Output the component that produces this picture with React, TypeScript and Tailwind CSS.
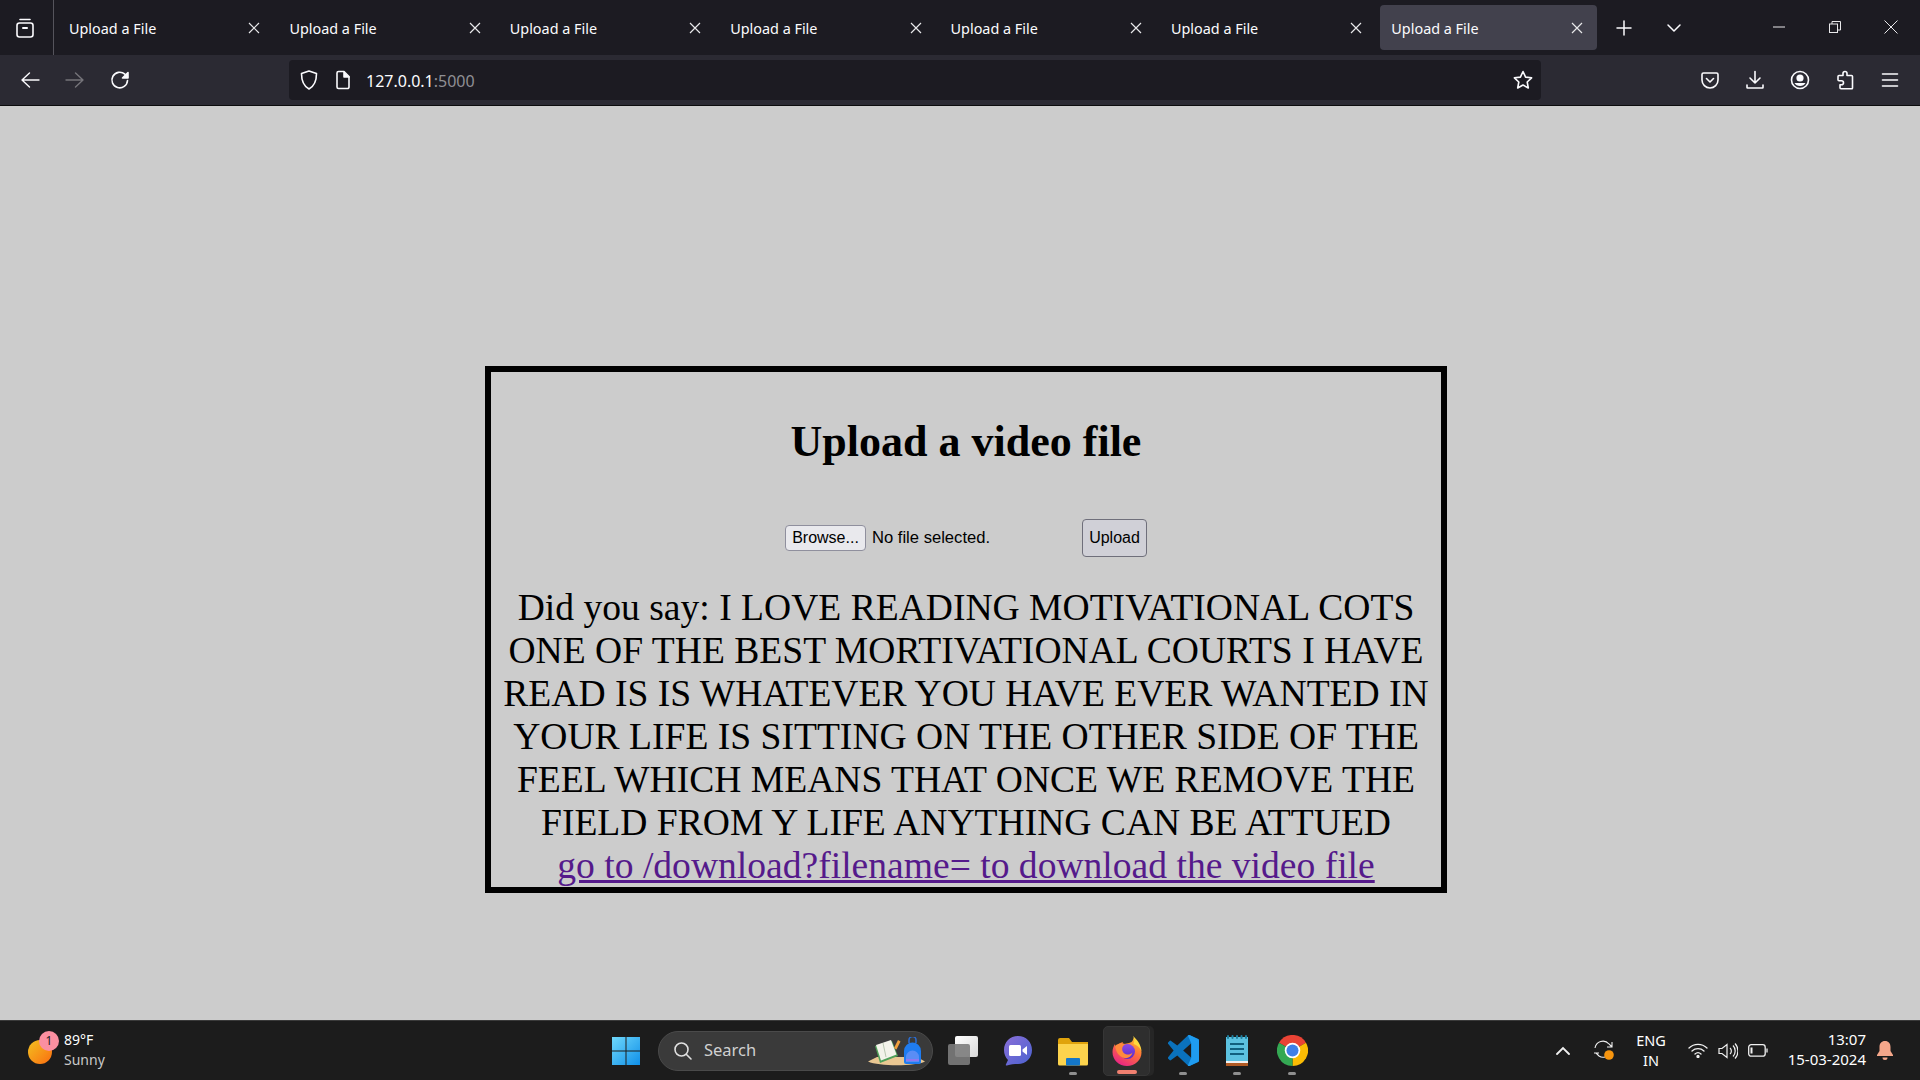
import React from "react";

const ui = "font-['Noto_Sans','Open_Sans',sans-serif]";

function Tab({ active }: { active?: boolean }) {
  return (
    <div className="w-[220.4px] shrink-0 px-[2px] pt-[5px] pb-[5px]">
      <div className={`h-[45px] rounded-[4px] flex items-center pl-[10px] pr-[14px] justify-between ${active ? "bg-[#42414d]" : ""}`}>
        <span className="text-[14.4px] text-[#fbfbfe] ml-[1px] translate-y-[1px]">Upload a File</span>
        <svg width="12" height="12" viewBox="0 0 12 12" fill="none" stroke="#e8e8ea" strokeWidth="1.2"><path d="M1 1l10 10M11 1L1 11" /></svg>
      </div>
    </div>
  );
}

function Ico({ children, w = 20, h = 20, vb = "0 0 20 20", color = "#fbfbfe", sw = 1.6 }: { children: React.ReactNode; w?: number; h?: number; vb?: string; color?: string; sw?: number }) {
  return (
    <svg width={w} height={h} viewBox={vb} fill="none" stroke={color} strokeWidth={sw} strokeLinecap="round" strokeLinejoin="round">
      {children}
    </svg>
  );
}

const lines = [
  "Did you say: I LOVE READING MOTIVATIONAL COTS",
  "ONE OF THE BEST MORTIVATIONAL COURTS I HAVE",
  "READ IS IS WHATEVER YOU HAVE EVER WANTED IN",
  "YOUR LIFE IS SITTING ON THE OTHER SIDE OF THE",
  "FEEL WHICH MEANS THAT ONCE WE REMOVE THE",
  "FIELD FROM Y LIFE ANYTHING CAN BE ATTUED",
];

function Firefox() {
  return (
    <svg width="30" height="30" viewBox="0 0 30 30">
      <defs>
        <linearGradient id="ff" x1="0.8" y1="0" x2="0.25" y2="1">
          <stop offset="0" stopColor="#ffc82d" />
          <stop offset="0.45" stopColor="#ff7139" />
          <stop offset="1" stopColor="#e8208a" />
        </linearGradient>
        <linearGradient id="ffp" x1="0.5" y1="0" x2="0.5" y2="1">
          <stop offset="0" stopColor="#8a4be8" />
          <stop offset="1" stopColor="#5b2bc4" />
        </linearGradient>
      </defs>
      <path d="M21 0c0 3 3 5 5 8 2 2.500 3.500 5.500 3.500 8.500C29.500 24 23 30 15 30S.5 24 .5 16c0-3 1-6 2.500-8 0 1.500.5 2.500 1.500 3.500C5.500 8.500 8 6.500 11 6c-.5 1-.5 2 0 2.500 3-1.500 7-1 9-3 1.500-1.500 1.500-3.500 1-5.500z" fill="url(#ff)" />
      <path d="M21 0c3.500 3 8 8 8.500 15-2-4-4.500-6-8-7 1-2.500 1-5.500-.5-8z" fill="#ffd83d" />
      <circle cx="15.500" cy="15.500" r="7.500" fill="url(#ffp)" />
      <path d="M3 10c3-3 7-3.500 10-2-1.500 1-2.500 2.500-2.800 4.500-.3 3 1.800 5.500 4.800 6 2 .3 4-.3 5.500-2-1 4-4.500 6-8 5.500C7 21 4 16 3 10z" fill="#ff8a3c" />
    </svg>
  );
}

function Chrome() {
  return (
    <svg width="31" height="31" viewBox="0 0 32 32">
      <path d="M16 16 L2.100 8 A16 16 0 0 1 29.900 8 Z" fill="#ea4335" />
      <path d="M16 16 L29.900 8 A16 16 0 0 1 16 32 Z" fill="#fbbc04" />
      <path d="M16 16 L16 32 A16 16 0 0 1 2.100 8 Z" fill="#34a853" />
      <circle cx="16" cy="16" r="8" fill="#fff" />
      <circle cx="16" cy="16" r="6.200" fill="#3f7fe8" />
    </svg>
  );
}

function TaskApp({ w, mark, children }: { w: string; mark?: boolean; children: React.ReactNode }) {
  return (
    <div className={`relative h-[50px] flex items-center justify-center ${w}`}>
      {children}
      {mark && <span className="absolute bottom-[1px] left-1/2 -translate-x-1/2 w-[8px] h-[3px] rounded-full bg-[#8f8f8f]" />}
    </div>
  );
}

export default function App() {
  return (
    <div className={`w-[1920px] h-[1080px] overflow-hidden flex flex-col bg-[#cccccc] ${ui}`}>
      {/* tab strip */}
      <div className="h-[55px] shrink-0 bg-[#1c1b22] flex">
        <div className="w-[54px] shrink-0 border-r border-[#55545c] flex items-center justify-center pr-[3px]">
          <Ico w={20} h={22} vb="0 0 20 22">
            <path d="M5 2.500h10" />
            <rect x="2" y="6" width="16" height="14" rx="2.500" />
            <path d="M8 11h4" strokeWidth="2" />
          </Ico>
        </div>
        <div className="ml-[2px] flex">
          {[0, 1, 2, 3, 4, 5].map((i) => <Tab key={i} />)}
          <Tab active />
        </div>
        <div className="w-[50px] flex items-center justify-center">
          <Ico w={18} h={18} vb="0 0 18 18" sw={1.5}><path d="M9 2v14M2 9h14" /></Ico>
        </div>
        <div className="w-[50px] flex items-center justify-center">
          <Ico w={18} h={12} vb="0 0 18 12" sw={1.5}><path d="M3 3l6 6 6-6" /></Ico>
        </div>
        <div className="ml-auto flex items-center pb-[2px] pr-[1px]">
          <div className="w-[56px] flex justify-center">
            <svg width="12" height="12" viewBox="0 0 12 12" stroke="#e8e8ea" strokeWidth="1"><path d="M0 6h12" /></svg>
          </div>
          <div className="w-[56px] flex justify-center">
            <svg width="12" height="12" viewBox="0 0 12 12" fill="none" stroke="#e8e8ea" strokeWidth="1"><rect x="0.500" y="3" width="8" height="8.500" /><path d="M3 3V0.500h8.500V9H8.500" /></svg>
          </div>
          <div className="w-[56px] flex justify-center">
            <svg width="14" height="14" viewBox="0 0 14 14" stroke="#e8e8ea" strokeWidth="1"><path d="M0.500 0.500l13 13M13.500 0.500l-13 13" /></svg>
          </div>
        </div>
      </div>

      {/* toolbar */}
      <div className="h-[51px] shrink-0 bg-[#2b2a33] border-b border-[#0c0c0d] flex items-center">
        <div className="w-[289px] shrink-0 flex items-center pl-[20px] gap-[25px]">
          <Ico sw={1.4}><path d="M19 10H2M9.500 3L2 10l7.500 7" /></Ico>
          <Ico color="#75747a" sw={1.4}><path d="M1 10h17M10.500 3L18 10l-7.500 7" /></Ico>
          <Ico><path d="M17.500 10.500a7.800 7.800 0 1 1-2.600-6.300L17.500 7" /><path d="M18 2.500V8h-5.500z" fill="#fbfbfe" /></Ico>
        </div>
        <div className="w-[1252px] h-[40px] rounded-[4px] bg-[#1c1b22] flex items-center pl-[10px] pr-[7px]">
          <Ico w={20} h={22} vb="0 0 20 22"><path d="M10 2l7.500 2.500c0 7-2 12.500-7.500 15.500C4.500 17 2.500 11.500 2.500 4.500z" /></Ico>
          <span className="ml-[16px]">
            <Ico w={16} h={20} vb="0 0 16 20"><path d="M2 3a1.500 1.500 0 0 1 1.500-1.500H9l5 5V17a1.500 1.500 0 0 1-1.500 1.500h-9A1.500 1.500 0 0 1 2 17z" /><path d="M9 2v5h5" fill="#fbfbfe" /></Ico>
          </span>
          <span className="ml-[15px] text-[16px] translate-y-[1px] text-[#fbfbfe]">127.0.0.1<span className="text-[#8f8f94]">:5000</span></span>
          <span className="ml-auto">
            <Ico w={22} h={22} vb="0 0 22 22"><path d="M11 2.500l2.600 5.600 6 .7-4.400 4.200 1.100 6-5.300-3-5.300 3 1.100-6L2.400 8.800l6-.7z" /></Ico>
          </span>
        </div>
        <div className="flex-1 flex items-center justify-end pr-[20px] gap-[25px]">
          <Ico w={20} h={20}><path d="M3.500 3h13A1.500 1.500 0 0 1 18 4.500V10a8 8 0 0 1-16 0V4.500A1.500 1.500 0 0 1 3.500 3z" /><path d="M6.500 8.500l3.500 3.500 3.500-3.500" /></Ico>
          <Ico w={20} h={20}><path d="M10 1.500v11.500M5 8l5 5 5-5" /><path d="M2 15v2.500a.5.5 0 0 0 .5.5h15a.5.5 0 0 0 .5-.5V15" /></Ico>
          <Ico w={20} h={20}><circle cx="10" cy="10" r="8.500" /><circle cx="10" cy="8" r="2.800" fill="#fbfbfe" /><path d="M4.500 13h11c-1 2-3 3-5.500 3s-4.500-1-5.500-3z" fill="#fbfbfe" stroke="none" /></Ico>
          <Ico w={20} h={20}><path d="M8 5.500V3.500a2 2 0 0 1 4 0v2h4.500a1 1 0 0 1 1 1V18a.8.800 0 0 1-.8.8H6a1 1 0 0 1-1-1v-3h1.500a2 2 0 0 0 0-4H4a1 1 0 0 1-1-1V6.500a1 1 0 0 1 1-1z" /></Ico>
          <Ico w={20} h={20}><path d="M2.500 4h15M2.500 10h15M2.500 16h15" /></Ico>
        </div>
      </div>

      {/* page */}
      <main className="flex-1 flex flex-col items-center pt-[260px]">
        <div className="ml-[12px] w-[962px] h-[527px] border-[6px] border-black text-center font-['Liberation_Serif',serif] text-black">
          <h1 className="mt-[45px] text-[44px] leading-[49px] font-bold">Upload a video file</h1>
          <form className="mt-[53px] h-[38px] flex items-center justify-center font-['Liberation_Sans',sans-serif] text-[16.6px]" onSubmit={(e) => e.preventDefault()}>
            <button type="button" className="w-[81px] h-[26px] rounded-[4px] border border-[#8f8f9d] bg-[#e9e9ed] text-[16px] leading-none">Browse...</button>
            <span className="ml-[6px] w-[210px] text-left">No file selected.</span>
            <button type="submit" className="w-[65px] h-[38px] rounded-[4px] border border-[#6f6f7b] bg-[#d0d0d7] text-[16px] leading-none">Upload</button>
          </form>
          <div className="mt-[29px] text-[37.6px] leading-[43px]">
            {lines.map((l) => <div key={l} className="whitespace-nowrap">{l}</div>)}
            <a href="#" className="text-[#551a8b] underline whitespace-nowrap">go to /download?filename= to download the video file</a>
          </div>
        </div>
      </main>

      {/* taskbar */}
      <div className="h-[60px] shrink-0 bg-[#1c1c1c] border-t border-[#3a3a3a] flex items-center relative">
        <div className="w-[611px] shrink-0 flex items-center pl-[28px]">
          <div className="relative w-[36px] h-[40px]">
            <span className="absolute left-0 top-[9px] w-[24px] h-[24px] rounded-full bg-gradient-to-br from-[#f0c020] to-[#f96a10]" />
            <span className="absolute left-[11px] top-0 w-[20px] h-[20px] rounded-full bg-[#fb8fa0] text-[12px] leading-[20px] text-center text-[#222]">1</span>
          </div>
          <div className="flex flex-col text-[14px] leading-[20px] -translate-y-[1px]">
            <span className="text-white">89°F</span>
            <span className="text-[#c8c8c8]">Sunny</span>
          </div>
        </div>

        <svg width="30" height="30" viewBox="0 0 30 30" className="shrink-0">
          <defs>
            <linearGradient id="win" x1="0" y1="0" x2="1" y2="1"><stop offset="0" stopColor="#6fd8fb" /><stop offset="1" stopColor="#0f8fe8" /></linearGradient>
          </defs>
          <path d="M1 1h13.500v13.500H1zM15.500 1H29v13.500H15.500zM1 15.500h13.500V29H1zM15.500 15.500H29V29H15.500z" fill="url(#win)" />
        </svg>

        <div className="ml-[17px] w-[275px] h-[40px] rounded-full bg-[#3a3a3a] border border-[#4a4a4a] flex items-center pl-[14px] relative shrink-0">
          <svg width="20" height="20" viewBox="0 0 20 20" fill="none" stroke="#e0e0e0" strokeWidth="1.600" strokeLinecap="round"><circle cx="8.500" cy="8.500" r="6.500" /><path d="M13.500 13.500L18 18" /></svg>
          <span className="ml-[11px] text-[16.5px] text-[#d0d0d0]">Search</span>
          <svg width="57" height="30" viewBox="0 0 57 30" className="absolute right-[7px] top-[5px]">
            <path d="M0 24.500L9 20h40l8 4.500c-10 5-46 5-57 0z" fill="#e9c792" />
            <path d="M7 9l17-5 6 15-18 7z" fill="#4fa058" />
            <path d="M8 8l15-5 5.500 14.500-15.500 6z" fill="#f3f3ea" />
            <path d="M15 6l3 14" stroke="#b9c7b0" strokeWidth="1" />
            <path d="M26 11l4-8 2.500 1.500-4 8z" fill="#f0a03c" />
            <path d="M36 14a8.500 8.500 0 0 1 17 0v11a2 2 0 0 1-2 2H38a2 2 0 0 1-2-2z" fill="#1f7cf0" />
            <path d="M41 6V3a3 3 0 0 1 7 0v3" fill="none" stroke="#2a6fd8" strokeWidth="1.500" />
            <path d="M38 20a6.500 6.500 0 0 1 13 0v5H38z" fill="#5a8df5" />
            <path d="M38 23h13" stroke="#a070f0" strokeWidth="1.500" />
          </svg>
        </div>

        <div className="ml-[15px] flex items-center shrink-0">
          <TaskApp w="w-[30px]">
            <div className="relative w-[30px] h-[29px]">
              <span className="absolute right-0 top-0 w-[23px] h-[21px] rounded-[2px] bg-gradient-to-br from-[#fff] to-[#d8d8d8]" />
              <span className="absolute left-0 bottom-0 w-[22px] h-[21px] rounded-[2px] bg-[#7c7c7c]/90" />
            </div>
          </TaskApp>
          <div className="ml-[25px]">
            <TaskApp w="w-[30px]">
              <svg width="30" height="31" viewBox="0 0 30 31">
                <defs><linearGradient id="meet" x1="0" y1="0" x2="1" y2="1"><stop offset="0" stopColor="#8a6fd8" /><stop offset="1" stopColor="#4a62d0" /></linearGradient></defs>
                <path d="M15 1c8 0 14 6 14 14s-6 14-14 14c-4 0-7 0-11 1.500-1 .3-1.500-.3-1-1.200L5 25C2.500 22.500 1 19 1 15 1 7 7 1 15 1z" fill="url(#meet)" />
                <rect x="6" y="10" width="12" height="11" rx="1.500" fill="#fff" />
                <path d="M19.500 14.500l4.500-3.500v9l-4.500-3.500z" fill="#fff" />
              </svg>
            </TaskApp>
          </div>
          <div className="ml-[25px]">
            <TaskApp w="w-[30px]" mark>
              <svg width="30" height="30" viewBox="0 0 30 30">
                <path d="M0 4a2 2 0 0 1 2-2h9l3 4h16v6H0z" fill="#e0a30c" />
                <path d="M0 8h30v20a1.500 1.500 0 0 1-1.500 1.500h-27A1.500 1.500 0 0 1 0 28z" fill="#fcd34d" />
                <rect x="8" y="22" width="14" height="7.500" rx="1" fill="#1477c9" />
              </svg>
            </TaskApp>
          </div>
          <div className="ml-[15px] relative w-[47px] h-[50px]">
            <span className="absolute right-[-4px] top-0 w-[47px] h-[50px] rounded-[5px] bg-[#262626]" />
            <div className="absolute inset-0 rounded-[5px] bg-[#2e2e2e] border border-[#363636] flex items-center justify-center">
              <Firefox />
              <span className="absolute bottom-[1px] left-1/2 -translate-x-1/2 w-[20px] h-[4px] rounded-full bg-[#f08070]" />
            </div>
          </div>
          <div className="ml-[17px]">
            <TaskApp w="w-[32px]" mark>
              <svg width="31" height="31" viewBox="0 0 100 100">
                <path fillRule="evenodd" d="M71 99L97 87a5 5 0 0 0 3-5V18a5 5 0 0 0-3-5L71 1a6 6 0 0 0-7 1L30 34 10 19a4 4 0 0 0-5 0L1 23a4 4 0 0 0 0 6L18 50 1 71a4 4 0 0 0 0 6l4 4a4 4 0 0 0 5 0L30 66l34 32a6 6 0 0 0 7 1zM75 27L49 50 75 73z" fill="#0a72bd" />
                <path d="M71 99L97 87a5 5 0 0 0 3-5V18a5 5 0 0 0-3-5L71 1a6 6 0 0 0-7 1L75 27V73L64 98a6 6 0 0 0 7 1z" fill="#1f9cf0" />
              </svg>
            </TaskApp>
          </div>
          <div className="ml-[27px]">
            <TaskApp w="w-[22px]" mark>
              <svg width="22" height="31" viewBox="0 0 22 31">
                <rect x="0" y="2" width="22" height="24" fill="#5cc2e0" />
                <rect x="0" y="26" width="22" height="2" fill="#f0f0f0" />
                <rect x="0" y="28" width="22" height="3" fill="#b05a24" />
                <path d="M2 3V1M6.500 3V1M11 3V1M15.500 3V1M20 3V1" stroke="#1f7f9e" strokeWidth="2" strokeLinecap="round" />
                <path d="M4 9h14M4 14h14M4 19h14" stroke="#11607e" strokeWidth="2" />
              </svg>
            </TaskApp>
          </div>
          <div className="ml-[28px]">
            <TaskApp w="w-[32px]" mark><Chrome /></TaskApp>
          </div>
        </div>

        <div className="flex-1 h-full relative text-white">
          <div className="absolute right-[350px] top-[25px]">
            <svg width="14" height="9" viewBox="0 0 14 9" fill="none" stroke="#f0f0f0" strokeWidth="1.800" strokeLinecap="round"><path d="M1 8l6-6 6 6" /></svg>
          </div>
          <div className="absolute right-[305px] top-[18px]">
            <svg width="22" height="22" viewBox="0 0 22 22" fill="none" stroke="#f0f0f0" strokeWidth="1.100">
              <path d="M2 9a8 8 0 0 1 14-4l3 3M19 3v5h-5" />
              <path d="M3 14l3 3a7 7 0 0 0 6 1M1 14h5" />
              <circle cx="16" cy="16" r="4.800" fill="#f7950e" stroke="none" />
            </svg>
          </div>
          <div className="absolute right-[251px] top-[9px] w-[36px] text-center text-[14.5px] leading-[20px]">ENG<br />IN</div>
          <div className="absolute right-[212px] top-[21px]">
            <svg width="20" height="16" viewBox="0 0 20 16" fill="none" stroke="#f0f0f0" strokeWidth="1.300" strokeLinecap="round"><path d="M1 6a13 13 0 0 1 18 0M4 9a9 9 0 0 1 12 0M7 12a4.500 4.500 0 0 1 6 0" /><circle cx="10" cy="14.500" r="1" fill="#f0f0f0" /></svg>
          </div>
          <div className="absolute right-[182px] top-[21px]">
            <svg width="20" height="18" viewBox="0 0 20 18" fill="none" stroke="#f0f0f0" strokeWidth="1.200"><path d="M1 6.500h3l5-4v13l-5-4H1z" /><path d="M12 6a4 4 0 0 1 0 6M15 3.500a8 8 0 0 1 0 11M17 1.500a11 11 0 0 1 0 15" /></svg>
          </div>
          <div className="absolute right-[152px] top-[23px]">
            <svg width="20" height="13" viewBox="0 0 20 13" fill="none" stroke="#f0f0f0" strokeWidth="1.300"><rect x="0.700" y="0.700" width="16.500" height="11.500" rx="2.500" /><path d="M19 4.500v4" /><path d="M3.500 3.500v6" strokeWidth="2" /></svg>
          </div>
          <div className="absolute right-[54px] top-[8px] text-right text-[15px] leading-[20px]">13:07<br />15-03-2024</div>
          <div className="absolute right-[27px] top-[20px]">
            <svg width="16" height="20" viewBox="0 0 16 20" fill="#f6a78a"><path d="M8 0c3.500 0 5.500 2.500 5.500 6v4l2.500 4v1H0v-1l2.500-4V6C2.500 2.500 4.500 0 8 0z" /><path d="M5.500 16.500h5a2.500 2.500 0 0 1-5 0z" /></svg>
          </div>
        </div>
      </div>
    </div>
  );
}
